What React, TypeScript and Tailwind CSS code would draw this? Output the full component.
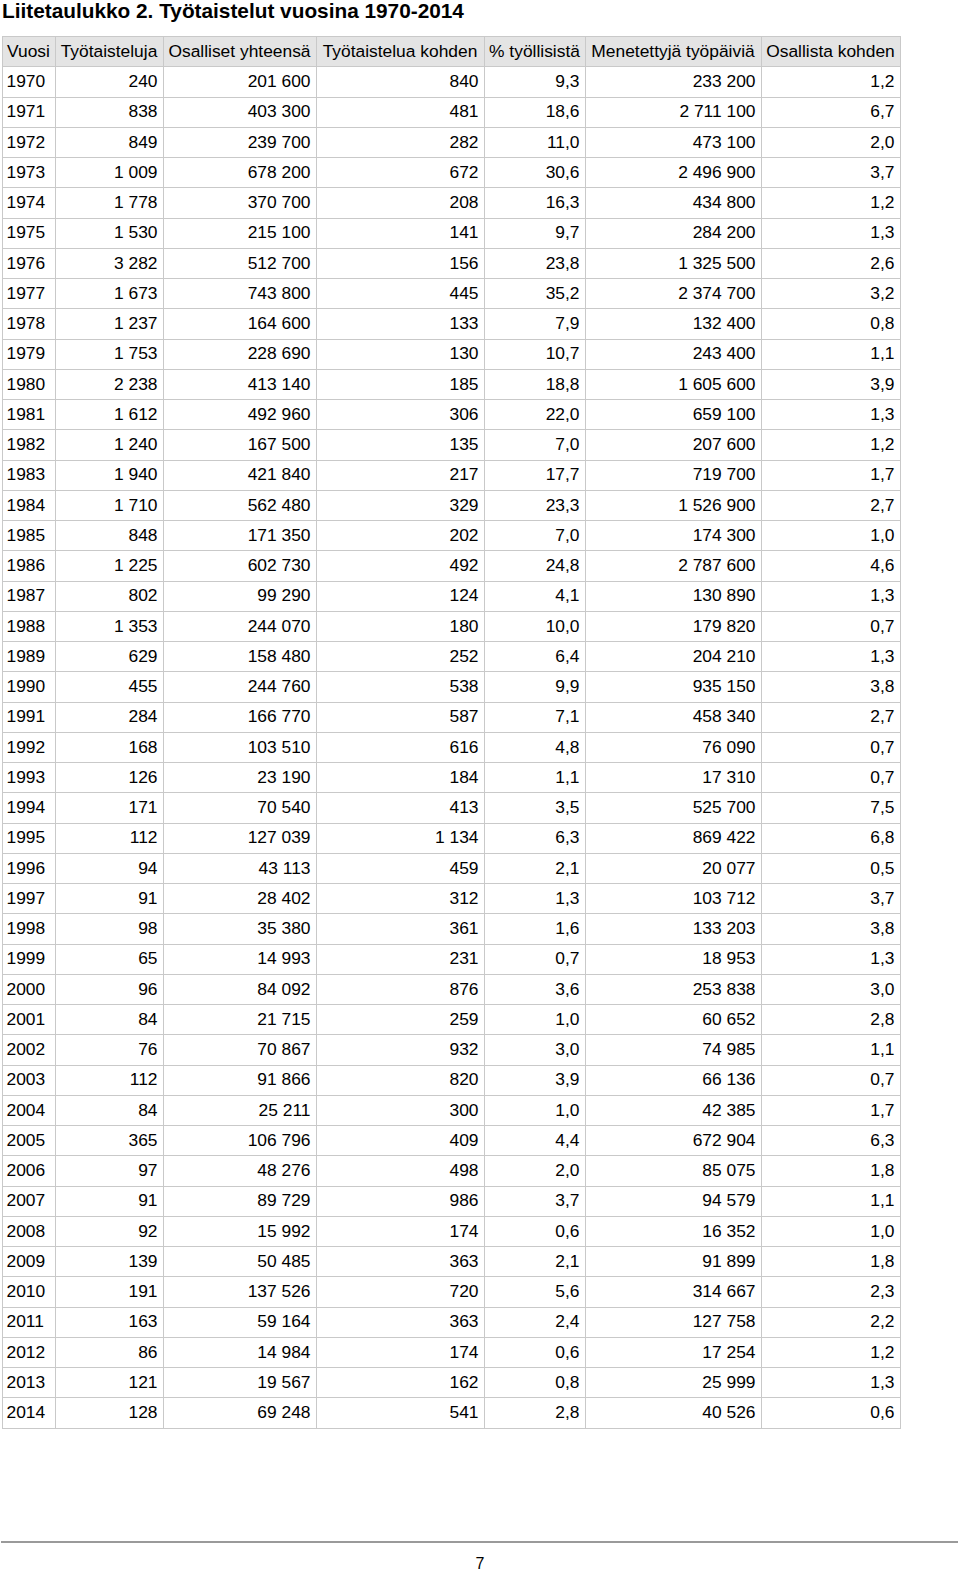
import React from "react";

const rows: string[][] = [
  ["1970", "240", "201 600", "840", "9,3", "233 200", "1,2"],
  ["1971", "838", "403 300", "481", "18,6", "2 711 100", "6,7"],
  ["1972", "849", "239 700", "282", "11,0", "473 100", "2,0"],
  ["1973", "1 009", "678 200", "672", "30,6", "2 496 900", "3,7"],
  ["1974", "1 778", "370 700", "208", "16,3", "434 800", "1,2"],
  ["1975", "1 530", "215 100", "141", "9,7", "284 200", "1,3"],
  ["1976", "3 282", "512 700", "156", "23,8", "1 325 500", "2,6"],
  ["1977", "1 673", "743 800", "445", "35,2", "2 374 700", "3,2"],
  ["1978", "1 237", "164 600", "133", "7,9", "132 400", "0,8"],
  ["1979", "1 753", "228 690", "130", "10,7", "243 400", "1,1"],
  ["1980", "2 238", "413 140", "185", "18,8", "1 605 600", "3,9"],
  ["1981", "1 612", "492 960", "306", "22,0", "659 100", "1,3"],
  ["1982", "1 240", "167 500", "135", "7,0", "207 600", "1,2"],
  ["1983", "1 940", "421 840", "217", "17,7", "719 700", "1,7"],
  ["1984", "1 710", "562 480", "329", "23,3", "1 526 900", "2,7"],
  ["1985", "848", "171 350", "202", "7,0", "174 300", "1,0"],
  ["1986", "1 225", "602 730", "492", "24,8", "2 787 600", "4,6"],
  ["1987", "802", "99 290", "124", "4,1", "130 890", "1,3"],
  ["1988", "1 353", "244 070", "180", "10,0", "179 820", "0,7"],
  ["1989", "629", "158 480", "252", "6,4", "204 210", "1,3"],
  ["1990", "455", "244 760", "538", "9,9", "935 150", "3,8"],
  ["1991", "284", "166 770", "587", "7,1", "458 340", "2,7"],
  ["1992", "168", "103 510", "616", "4,8", "76 090", "0,7"],
  ["1993", "126", "23 190", "184", "1,1", "17 310", "0,7"],
  ["1994", "171", "70 540", "413", "3,5", "525 700", "7,5"],
  ["1995", "112", "127 039", "1 134", "6,3", "869 422", "6,8"],
  ["1996", "94", "43 113", "459", "2,1", "20 077", "0,5"],
  ["1997", "91", "28 402", "312", "1,3", "103 712", "3,7"],
  ["1998", "98", "35 380", "361", "1,6", "133 203", "3,8"],
  ["1999", "65", "14 993", "231", "0,7", "18 953", "1,3"],
  ["2000", "96", "84 092", "876", "3,6", "253 838", "3,0"],
  ["2001", "84", "21 715", "259", "1,0", "60 652", "2,8"],
  ["2002", "76", "70 867", "932", "3,0", "74 985", "1,1"],
  ["2003", "112", "91 866", "820", "3,9", "66 136", "0,7"],
  ["2004", "84", "25 211", "300", "1,0", "42 385", "1,7"],
  ["2005", "365", "106 796", "409", "4,4", "672 904", "6,3"],
  ["2006", "97", "48 276", "498", "2,0", "85 075", "1,8"],
  ["2007", "91", "89 729", "986", "3,7", "94 579", "1,1"],
  ["2008", "92", "15 992", "174", "0,6", "16 352", "1,0"],
  ["2009", "139", "50 485", "363", "2,1", "91 899", "1,8"],
  ["2010", "191", "137 526", "720", "5,6", "314 667", "2,3"],
  ["2011", "163", "59 164", "363", "2,4", "127 758", "2,2"],
  ["2012", "86", "14 984", "174", "0,6", "17 254", "1,2"],
  ["2013", "121", "19 567", "162", "0,8", "25 999", "1,3"],
  ["2014", "128", "69 248", "541", "2,8", "40 526", "0,6"],
];

const headers = [
  "Vuosi",
  "Työtaisteluja",
  "Osalliset yhteensä",
  "Työtaistelua kohden",
  "% työllisistä",
  "Menetettyjä työpäiviä",
  "Osallista kohden",
];

const widths = ["w-[53px]", "w-[108px]", "w-[153px]", "w-[168px]", "w-[101px]", "w-[176px]", "w-[139px]"];

export default function App() {
  return (
    <div className="w-[960px] h-[1572px] bg-white text-black font-['Liberation_Sans',Arial,sans-serif] overflow-hidden">
      <h1 className="h-[36px] pl-[2px] text-[20.8px] font-bold leading-[22px]">
        Liitetaulukko 2. Työtaistelut vuosina 1970-2014
      </h1>
      <table className="ml-[1.5px] w-[898px] table-fixed border-collapse text-[17.4px] leading-none">
        <colgroup>
          {widths.map((w, i) => (
            <col key={i} className={w} />
          ))}
        </colgroup>
        <thead>
          <tr className="bg-[#e4e4e4]">
            {headers.map((h, i) => (
              <th
                key={i}
                className="h-[30.25px] border border-[#c9c9c9] px-0 text-center font-normal whitespace-nowrap"
              >
                {h}
              </th>
            ))}
          </tr>
        </thead>
        <tbody>
          {rows.map((r, ri) => (
            <tr key={ri}>
              {r.map((c, ci) => (
                <td
                  key={ci}
                  className={
                    ci === 0
                      ? "h-[30.25px] border border-[#c9c9c9] pl-[4px] text-left whitespace-nowrap"
                      : "h-[30.25px] border border-[#c9c9c9] pr-[5px] text-right whitespace-nowrap"
                  }
                >
                  {c}
                </td>
              ))}
            </tr>
          ))}
        </tbody>
      </table>
      <div className="mt-[112px] ml-[1px] w-[957px] h-[2px] bg-[#9a9a9a]" />
      <div className="mt-[12px] text-center text-[16px] leading-[18px]">7</div>
    </div>
  );
}
